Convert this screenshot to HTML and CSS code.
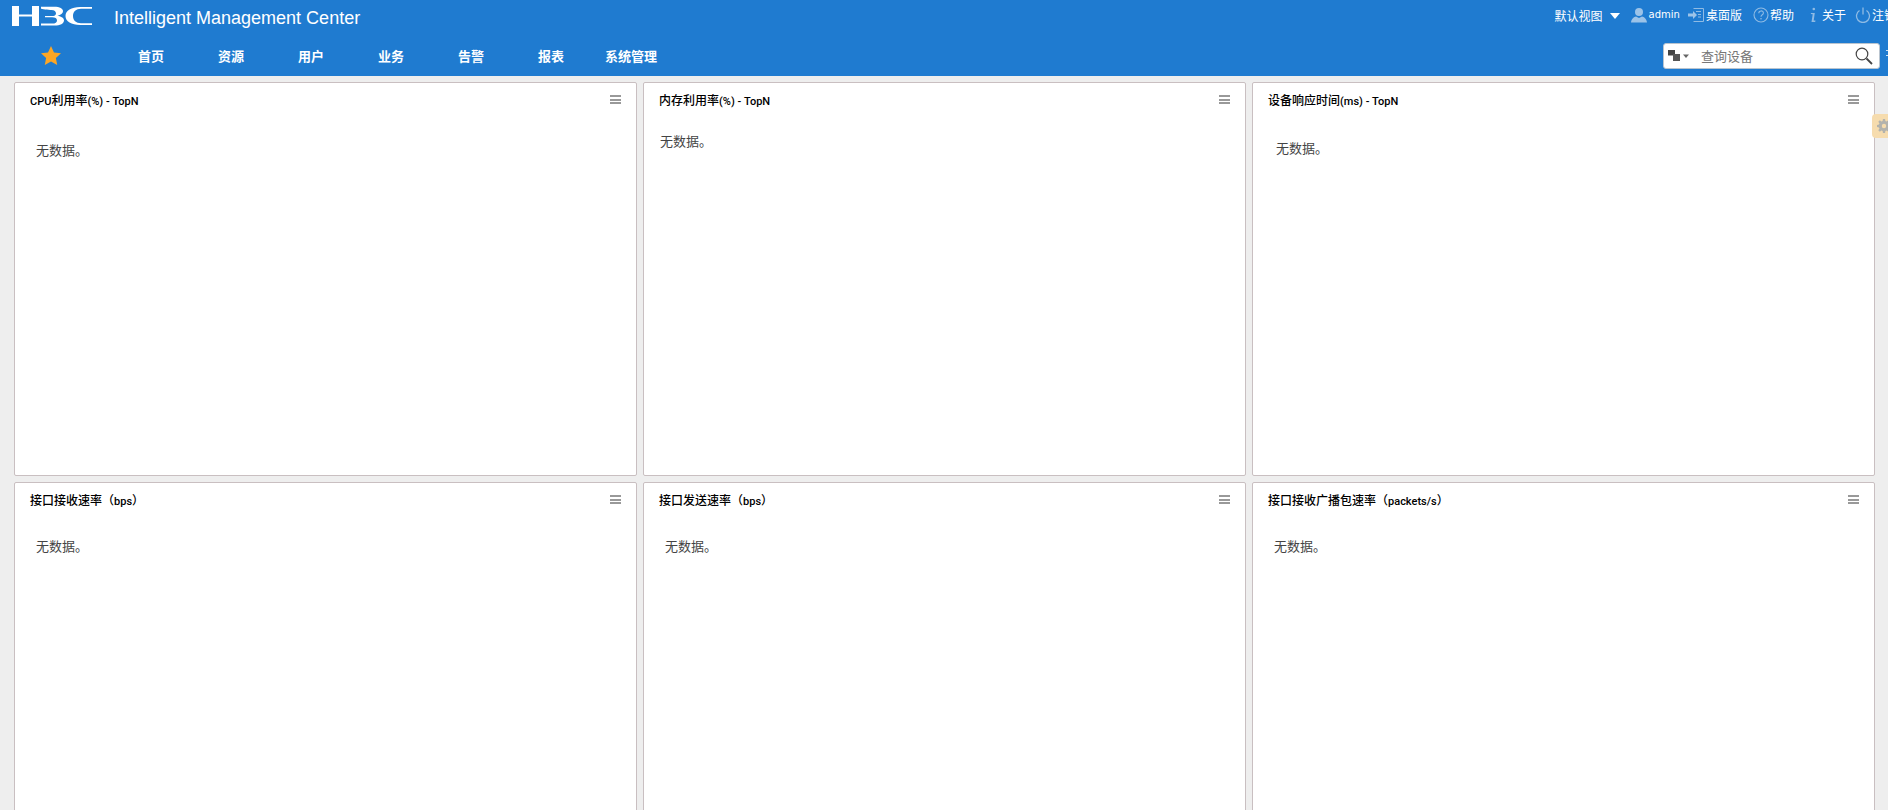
FILE: index.html
```html
<!DOCTYPE html>
<html lang="zh-CN">
<head>
<meta charset="utf-8">
<title>Intelligent Management Center</title>
<link rel="stylesheet" href="styles.css">
</head>
<body>
<header class="header">
  <div class="top-row">
    <svg class="logo" viewBox="0 0 80 20" aria-label="H3C">
      <path d="M0 0h7v8.600h13V0h7v20h-7V10.600H7V20H0z" fill="#fff"/>
      <path d="M29 .8h13c6 0 9 1.800 9 4.500 0 2.300-2.200 3.700-5.500 4.400 4 .7 6.500 2.300 6.500 4.700 0 3-3.800 5-9.500 5H29v-1.900h11c3.500 0 5-1.200 5-3.100s-1.800-3.100-5-3.100h-7V10h6.500c3 0 4.500-1 4.500-2.600S42.500 4 39.500 4 29 2.700 29 2.700z" fill="#fff"/>
      <path d="M80 1H68C59.500 1 53.500 4.500 53.500 10S59.500 19 68 19h12v-1.800H69c-5 0-8-2.900-8-7.200s3-7.200 8-7.200h11z" fill="#fff"/>
    </svg>
    <div class="product">Intelligent Management Center</div>
    <div class="tools">
      <span class="tool view">默认视图</span>
      <svg class="caret" viewBox="0 0 10 6"><path d="M0 0h10L5 6z" fill="#fff"/></svg>
      <svg class="ico user" viewBox="0 0 16 16"><circle cx="8" cy="5" r="4" fill="#9cc3e8"/><path d="M0 15.500c.5-4 3-5.500 5-6l3 1.500 3-1.500c2 .5 4.500 2 5 6z" fill="#9cc3e8"/></svg>
      <span class="tool admin">admin</span>
      <svg class="ico desk" viewBox="0 0 16 16"><path d="M5.500 1.500h10v13h-10" fill="none" stroke="#8fbbe4"/><path d="M8 4.500h5M10 7.500h3M10 10h3" stroke="#8fbbe4"/><path d="M0 6.500h5V4l4 4-4 4V9.500H0z" fill="#9cc3e8"/></svg>
      <span class="tool desk-label">桌面版</span>
      <svg class="ico help" viewBox="0 0 16 16"><circle cx="8" cy="8" r="7" fill="none" stroke="#8fbbe4" stroke-width="1.100"/><path d="M5.800 6.200c0-3 4.600-3 4.600-.2 0 1.800-2.400 1.800-2.400 3.700" fill="none" stroke="#8fbbe4" stroke-width="1.100"/><circle cx="8" cy="11.800" r=".8" fill="#8fbbe4"/></svg>
      <span class="tool help-label">帮助</span>
      <svg class="ico info" viewBox="0 0 8 16"><circle cx="4.800" cy="2" r="1.300" fill="#8fbbe4"/><path d="M2 6h3.800l-1.100 7.500 1.800.1-.3 1.400H2.500l1.200-7.800-1.900-.2z" fill="#8fbbe4"/></svg>
      <span class="tool about-label">关于</span>
      <svg class="ico power" viewBox="0 0 16 16"><path d="M4.500 3.500a6.500 6.500 0 1 0 7 0" fill="none" stroke="#8fbbe4" stroke-width="1.300"/><path d="M8 .5v7" stroke="#8fbbe4" stroke-width="1.300"/></svg>
      <span class="tool logout">注销</span>
    </div>
  </div>
  <div class="nav-row">
    <svg class="star" viewBox="0 0 20 19"><path d="M10 0l3 6.400 7 .9-5.100 4.800 1.300 6.900L10 15.600 3.800 19l1.300-6.900L0 7.300l7-.9z" fill="#fca625"/></svg>
    <nav class="nav">
      <a class="nav-item">首页</a>
      <a class="nav-item">资源</a>
      <a class="nav-item">用户</a>
      <a class="nav-item">业务</a>
      <a class="nav-item">告警</a>
      <a class="nav-item">报表</a>
      <a class="nav-item">系统管理</a>
    </nav>
    <div class="search">
      <svg class="search-type" viewBox="0 0 21 14"><path d="M0 1h7v5.500H0z" fill="#444"/><path d="M5 5h7v7H5z" fill="#555"/><path d="M15 5.500h6L18 9z" fill="#666"/></svg>
      <span class="search-text">查询设备</span>
      <svg class="search-icon" viewBox="0 0 18 18"><circle cx="7" cy="7" r="5.800" fill="none" stroke="#444" stroke-width="1.200"/><path d="M11.500 11.500l5.500 5.500" stroke="#444" stroke-width="1.800"/></svg>
    </div>
    <div class="edge-dots"></div>
  </div>
</header>

<main class="grid">
  <section class="card">
    <div class="card-head"><h2 class="card-title"><span class="lat">CPU</span>利用率<span class="lat">(%) - TopN</span></h2><span class="menu"></span></div>
    <p class="empty e1">无数据。</p>
  </section>
  <section class="card">
    <div class="card-head"><h2 class="card-title">内存利用率<span class="lat">(%) - TopN</span></h2><span class="menu"></span></div>
    <p class="empty e2">无数据。</p>
  </section>
  <section class="card">
    <div class="card-head"><h2 class="card-title">设备响应时间<span class="lat">(ms) - TopN</span></h2><span class="menu"></span></div>
    <p class="empty e3">无数据。</p>
  </section>
  <section class="card">
    <div class="card-head"><h2 class="card-title">接口接收速率（<span class="lat">bps</span>）</h2><span class="menu"></span></div>
    <p class="empty e4">无数据。</p>
  </section>
  <section class="card">
    <div class="card-head"><h2 class="card-title">接口发送速率（<span class="lat">bps</span>）</h2><span class="menu"></span></div>
    <p class="empty e4">无数据。</p>
  </section>
  <section class="card">
    <div class="card-head"><h2 class="card-title">接口接收广播包速率（<span class="lat">packets/s</span>）</h2><span class="menu"></span></div>
    <p class="empty e4">无数据。</p>
  </section>
</main>

<aside class="gear-tab">
  <svg class="gear" viewBox="0 0 16 16"><path fill-rule="evenodd" d="M6.800 0h2.400l.4 2.200 1.300.6 1.900-1.300 1.700 1.700-1.300 1.900.6 1.300 2.200.4v2.400l-2.200.4-.6 1.300 1.300 1.900-1.700 1.700-1.900-1.300-1.300.6-.4 2.200H6.800l-.4-2.200-1.300-.6-1.900 1.300-1.700-1.700 1.300-1.900-.6-1.300L0 9.200V6.800l2.200-.4.600-1.300-1.300-1.900 1.700-1.700 1.900 1.300 1.300-.6zM8 5.500a2.500 2.500 0 1 0 0 5 2.500 2.500 0 0 0 0-5z" fill="#b3b3ad"/></svg>
</aside>
</body>
</html>
```

FILE: styles.css
```css
* { box-sizing: border-box; }

html, body {
  margin: 0;
  height: 810px;
  overflow: hidden;
}

body {
  background: #eeeeee;
  font-family: "Noto Sans", "Noto Sans CJK SC", sans-serif;
  font-size: 12px;
  color: #444;
}

.header {
  height: 76px;
  background: #1f7bd0;
  color: #fff;
  overflow: hidden;
}

.top-row {
  height: 36px;
  display: flex;
  align-items: center;
  padding-left: 12px;
}

.logo {
  width: 80px;
  height: 20px;
  margin-top: -4px;
  flex: none;
}

.product {
  margin-left: 22px;
  font-family: "Liberation Sans", Arial, sans-serif;
  font-size: 18px;
  white-space: nowrap;
}

.tools {
  margin-left: auto;
  display: flex;
  align-items: center;
  height: 32px;
  margin-top: -6px;
}

.tool {
  font-family: "Noto Sans CJK SC", "Noto Sans", sans-serif;
  font-size: 12px;
  line-height: 16px;
  white-space: nowrap;
}

.view { margin-top: 2px; }
.caret { width: 10px; height: 6px; margin: 2px 0 0 7px; flex: none; }
.ico { height: 16px; flex: none; }
.user { width: 16px; margin-left: 11px; }
.admin { margin-left: 2px; font-family: "DejaVu Sans", sans-serif; font-size: 10px; }
.desk { width: 16px; margin-left: 8px; }
.desk-label { margin-left: 2px; }
.help { width: 16px; margin-left: 11px; }
.help-label { margin-left: 1px; }
.info { width: 8px; margin-left: 15px; }
.about-label { margin-left: 5px; }
.power { width: 16px; margin-left: 9px; }
.logout { margin-left: 1px; width: 16px; overflow: hidden; flex: none; }

.nav-row {
  height: 38px;
  display: flex;
  align-items: center;
  padding-left: 41px;
  position: relative;
}

.star { width: 20px; height: 19px; flex: none; }

.nav {
  display: flex;
  margin-left: 50px;
}

.nav-item {
  width: 80px;
  text-align: center;
  font-family: "Noto Sans CJK SC", sans-serif;
  font-size: 13px;
  font-weight: 700;
  color: #fff;
  white-space: nowrap;
}

.search {
  margin-left: auto;
  margin-right: 8px;
  width: 217px;
  height: 26px;
  background: #fff;
  border: 1px solid #b9c4cf;
  border-radius: 3px;
  display: flex;
  align-items: center;
  padding: 0 6px 0 4px;
  margin-top: 1px;
}

.search-type { width: 21px; height: 14px; flex: none; }
.search-text { margin-left: 12px; font-family: "Noto Sans CJK SC", sans-serif; font-size: 13px; color: #777; }
.search-icon { width: 18px; height: 18px; margin-left: auto; flex: none; }

.edge-dots {
  position: absolute;
  right: 0;
  top: 14px;
  width: 2px;
  height: 6px;
  border-top: 1px solid #cfe3f5;
  border-bottom: 1px solid #cfe3f5;
}

.grid {
  display: grid;
  grid-template-columns: 623px 603px 623px;
  grid-auto-rows: 394px;
  column-gap: 6px;
  row-gap: 6px;
  padding: 6px 0 0 14px;
}

.card {
  background: #fff;
  border: 1px solid #c9bfc1;
  border-radius: 2px;
  min-width: 0;
}

.card-head {
  height: 32px;
  display: flex;
  align-items: center;
  justify-content: space-between;
  padding: 0 15px;
}

.card-title {
  margin: 0;
  font-family: "Noto Sans CJK SC", sans-serif;
  font-size: 12px;
  font-weight: 500;
  color: #000;
  white-space: nowrap;
}

.lat {
  font-family: Roboto, sans-serif;
  font-size: 11px;
}

.menu {
  width: 11px;
  height: 9px;
  margin-top: 1px;
  border-top: 2px solid #999;
  border-bottom: 2px solid #999;
  position: relative;
  flex: none;
}

.menu::after {
  content: "";
  position: absolute;
  left: 0;
  right: 0;
  top: 1.500px;
  height: 2px;
  background: #999;
}

.empty {
  margin: 0;
  font-family: "Noto Sans CJK SC", sans-serif;
  font-size: 13px;
  line-height: 18px;
  color: #444;
}

.e1 { padding: 26px 0 0 21px; }
.e2 { padding: 17px 0 0 16px; }
.e3 { padding: 24px 0 0 23px; }
.e4 { padding: 22px 0 0 21px; }

.gear-tab {
  position: absolute;
  left: 1872px;
  top: 114px;
  width: 16px;
  height: 24px;
  background: #f6dcae;
  border-radius: 4px 0 0 4px;
  padding: 5px 0 0 5px;
  overflow: hidden;
}

.gear { display: block; width: 14px; height: 14px; }
```
